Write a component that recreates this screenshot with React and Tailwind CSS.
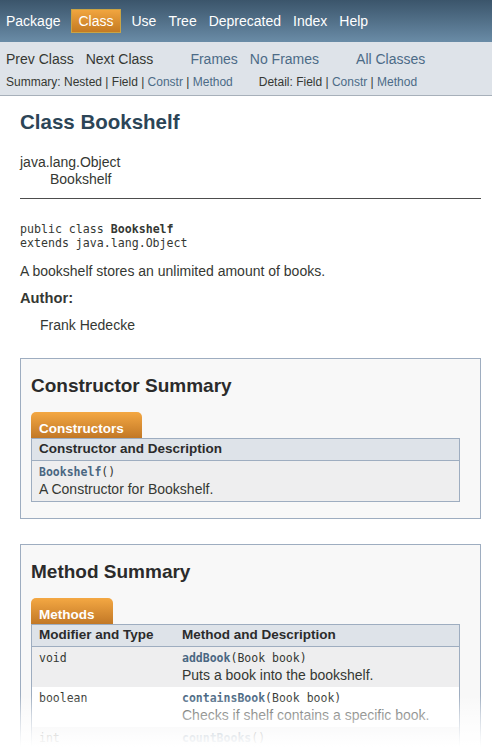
import React from 'react';

const NAV = ['Package', 'Class', 'Use', 'Tree', 'Deprecated', 'Index', 'Help'];
const LINK = 'text-[#4c6b87]';
const MONO = "font-['DejaVu_Sans_Mono',monospace]";

function TopNav() {
  return (
    <div className="h-[42px] flex items-center text-white text-[14px] bg-linear-to-b from-[#3b556b] to-[#6a8ca7]">
      {NAV.map(n => n === 'Class' ? (
        <span key={n} className="mx-[5px] h-[24px] px-[6px] pt-[1px] flex items-center border border-[#c9a444] bg-linear-to-b from-[#f1a53f] to-[#c47a22]">{n}</span>
      ) : (
        <span key={n} className="px-[6px] pt-[1px]">{n}</span>
      ))}
    </div>
  );
}

function SubNav() {
  return (
    <div className="bg-[#dee3e9] border-b border-[#a7b0ba] pb-[7px]">
      <div className="h-[34px] flex items-center text-[14px]">
        <span className="ml-[6px]">Prev Class</span>
        <span className="ml-[12px]">Next Class</span>
        <span className={`ml-[37px] ${LINK}`}>Frames</span>
        <span className={`ml-[12px] ${LINK}`}>No Frames</span>
        <span className={`ml-[37px] ${LINK}`}>All Classes</span>
      </div>
      <div className="h-[12px] flex items-center text-[12px] leading-[12px] whitespace-pre">
        <span className="ml-[6px]">
          Summary: Nested | Field | <span className={LINK}>Constr</span> | <span className={LINK}>Method</span>
        </span>
        <span className="ml-[26px]">
          Detail: Field | <span className={LINK}>Constr</span> | <span className={LINK}>Method</span>
        </span>
      </div>
    </div>
  );
}

function Block({ title, tab, head, rows, className = '' }) {
  return (
    <div className={`border border-[#9eadc0] bg-[#f8f8f8] pl-[10px] pr-[20px] pb-[16px] ${className}`}>
      <h3 className="pt-[16px] text-[19px] leading-[22px] font-bold text-[#2b2b2b]">{title}</h3>
      <div className="mt-[15px] flex">
        <span className="h-[26px] pl-[8px] pr-[18px] pt-[9px] leading-[15px] text-[13.5px] font-bold text-white rounded-t-[5px] bg-linear-to-b from-[#f4a843] to-[#c27826]">
          {tab}
        </span>
      </div>
      <div className="border border-[#9eadc0]">
        <div className="h-[22px] flex items-center bg-[#dee3e9] border-b border-[#9eadc0] text-[13.5px] font-bold text-[#2b2b2b]">
          {head.map((h, i) => (
            <span key={i} className={`pl-[7px] ${head.length > 1 && i === 0 ? 'w-[143px]' : ''}`}>{h}</span>
          ))}
        </div>
        {rows.map((r, i) => (
          <div key={i} className={`h-[40px] flex ${i % 2 === 0 ? 'bg-[#eeeeef]' : 'bg-white'}`}>
            {r.type !== undefined && (
              <div className={`w-[143px] pl-[7px] pt-[3px] leading-[16px] text-[11.5px] ${MONO}`}>{r.type}</div>
            )}
            <div className="pl-[7px] pt-[3px]">
              <div className={`leading-[16px] text-[11.5px] ${MONO}`}>
                <span className="font-bold text-[#4a6782]">{r.name}</span>{r.args}
              </div>
              <div className="leading-[18px] text-[14px]">{r.desc}</div>
            </div>
          </div>
        ))}
      </div>
    </div>
  );
}

export default function App() {
  return (
    <div className="relative h-[747px] overflow-hidden bg-white text-[#353833] font-['Liberation_Sans',Arial,sans-serif]">
      <TopNav />
      <SubNav />

      <div className="pl-[20px] pr-[11px] pt-[14px]">
        <h1 className="text-[20.5px] leading-[24px] font-bold text-[#2c4557]">Class Bookshelf</h1>

        <div className="mt-[20px] text-[14px] leading-[17px]">
          <div>java.lang.Object</div>
          <div className="pl-[30px]">Bookshelf</div>
        </div>
        <div className="mt-[10px] border-t border-[#4d4d4d]" />

        <pre className={`mt-[23px] text-[11.6px] leading-[14px] ${MONO}`}>
          public class <b>Bookshelf</b>{'\n'}extends java.lang.Object
        </pre>
        <p className="mt-[13px] text-[14px] leading-[17px]">A bookshelf stores an unlimited amount of books.</p>
        <div className="mt-[10px] text-[14.7px] leading-[17px] font-bold">Author:</div>
        <div className="mt-[10px] pl-[20px] text-[14px] leading-[17px]">Frank Hedecke</div>

        <Block
          className="mt-[24px]"
          title="Constructor Summary"
          tab="Constructors"
          head={['Constructor and Description']}
          rows={[{ name: 'Bookshelf', args: '()', desc: 'A Constructor for Bookshelf.' }]}
        />

        <Block
          className="mt-[25px]"
          title="Method Summary"
          tab="Methods"
          head={['Modifier and Type', 'Method and Description']}
          rows={[
            { type: 'void', name: 'addBook', args: '(Book book)', desc: 'Puts a book into the bookshelf.' },
            { type: 'boolean', name: 'containsBook', args: '(Book book)', desc: 'Checks if shelf contains a specific book.' },
            { type: 'int', name: 'countBooks', args: '()', desc: 'Returns the number of books.' },
          ]}
        />
      </div>

      <div className="absolute left-0 right-0 bottom-0 h-[52px] pointer-events-none bg-[linear-gradient(to_bottom,rgba(255,255,255,0)_0%,rgba(255,255,255,0.5)_38%,rgba(255,255,255,0.88)_80%,#fff_100%)]" />
    </div>
  );
}
